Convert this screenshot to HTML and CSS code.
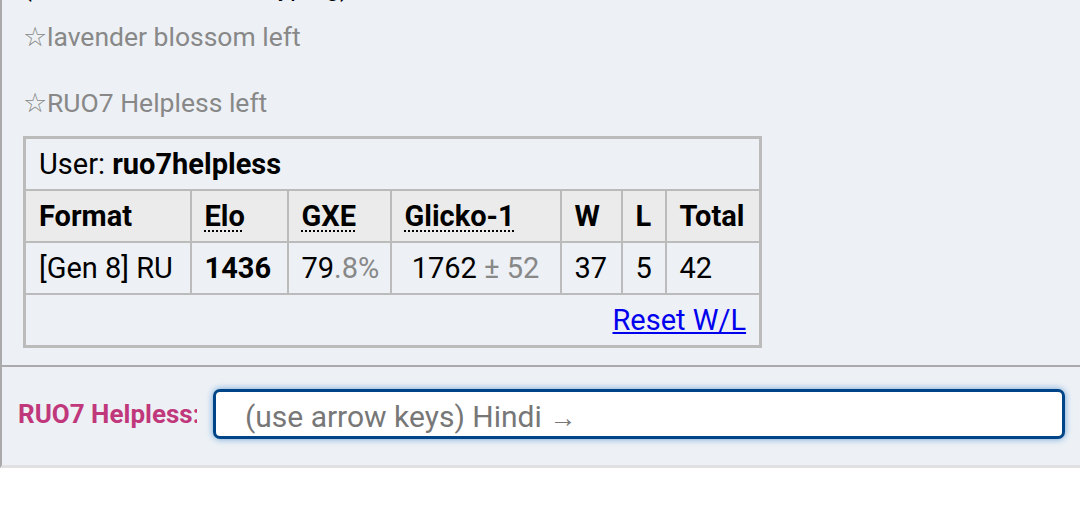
FILE: index.html
```html
<!DOCTYPE html>
<html>
<head>
<meta charset="utf-8">
<link rel="stylesheet" href="styles.css">
</head>
<body>
<div class="room">
  <div class="log">
    <div class="chat">(lavender blossom is typing)</div>
    <div class="notice">☆lavender blossom left</div>
    <div class="notice">☆RUO7 Helpless left</div>
    <table class="ladder">
      <colgroup>
        <col class="c-format">
        <col class="c-elo">
        <col class="c-gxe">
        <col class="c-glicko">
        <col class="c-w">
        <col class="c-l">
        <col class="c-total">
      </colgroup>
      <tr><td colspan="7" class="user">User: <strong>ruo7helpless</strong></td></tr>
      <tr class="head">
        <th>Format</th>
        <th><abbr>Elo</abbr></th>
        <th><abbr>GXE</abbr></th>
        <th><abbr>Glicko-1</abbr></th>
        <th>W</th>
        <th>L</th>
        <th>Total</th>
      </tr>
      <tr>
        <td>[Gen 8] RU</td>
        <td><strong>1436</strong></td>
        <td>79<span class="dim">.8%</span></td>
        <td class="center">1762 <span class="dim">± 52</span></td>
        <td>37</td>
        <td>5</td>
        <td>42</td>
      </tr>
      <tr><td colspan="7" class="reset"><a href="#">Reset W/L</a></td></tr>
    </table>
  </div>
  <div class="composer">
    <div class="name">RUO7 Helpless:</div>
    <div class="textbox">(use arrow keys) Hindi <span class="arrow">→</span></div>
  </div>
</div>
</body>
</html>
```

FILE: styles.css
```css
html, body {
  margin: 0;
  padding: 0;
  background: #ffffff;
  font-family: Roboto, "Liberation Sans", sans-serif;
}

.room {
  width: 1078px;
  border-left: 2px solid #aaaaaa;
  background: #edf1f5;
  border-bottom: 3px solid #e0e0e0;
}

.log {
  height: 367px;
  overflow: hidden;
  display: flex;
  flex-direction: column;
  justify-content: flex-end;
  padding: 0 0 17px 21px;
  box-sizing: border-box;
  border-bottom: 2px solid #aaaaaa;
}

.chat {
  font-size: 26px;
  line-height: 34px;
  color: #000;
}

.notice {
  font-size: 26.5px;
  line-height: 34px;
  padding: 16px 0;
  color: #888888;
}

.ladder {
  border-collapse: collapse;
  border: 3px solid #bbbbbb;
  font-size: 29px;
  color: #000;
  width: 736px;
  table-layout: fixed;
}

.c-format { width: 166px; }
.c-elo { width: 97px; }
.c-gxe { width: 103px; }
.c-glicko { width: 170px; }
.c-w { width: 61px; }
.c-l { width: 44px; }
.c-total { width: 95px; }

.ladder td, .ladder th {
  border: 2px solid #bbbbbb;
  height: 50px;
  padding: 0 0 0 13px;
  text-align: left;
  line-height: 30px;
  white-space: nowrap;
  overflow: hidden;
}

.ladder .head th {
  background: #ebebeb;
  font-weight: bold;
}

abbr {
  text-decoration: underline dotted;
  text-decoration-thickness: 2px;
  text-underline-offset: 4px;
}

.ladder td.center {
  text-align: center;
  padding: 0;
}

.dim {
  color: #888888;
}

.ladder td.reset {
  text-align: right;
  padding: 0 13px 0 0;
}

.reset a {
  color: #0000ee;
  text-decoration: underline;
}

.composer {
  height: 98px;
  display: flex;
  align-items: center;
  padding: 0 15px 4px 16px;
  box-sizing: border-box;
}

.name {
  width: 179px;
  flex: none;
  overflow: hidden;
  white-space: nowrap;
  font-weight: bold;
  font-size: 26px;
  color: #c0387b;
  margin-right: 16px;
}

.textbox {
  flex: 1;
  height: 50px;
  box-sizing: border-box;
  border: 3px solid #004488;
  border-radius: 7px;
  background: #ffffff;
  box-shadow: 0 0 7px #6aa0d8;
  color: #777777;
  font-size: 30px;
  line-height: 38px;
  padding: 6px 0 0 29px;
}

.arrow {
  font-size: 27px;
}
```
